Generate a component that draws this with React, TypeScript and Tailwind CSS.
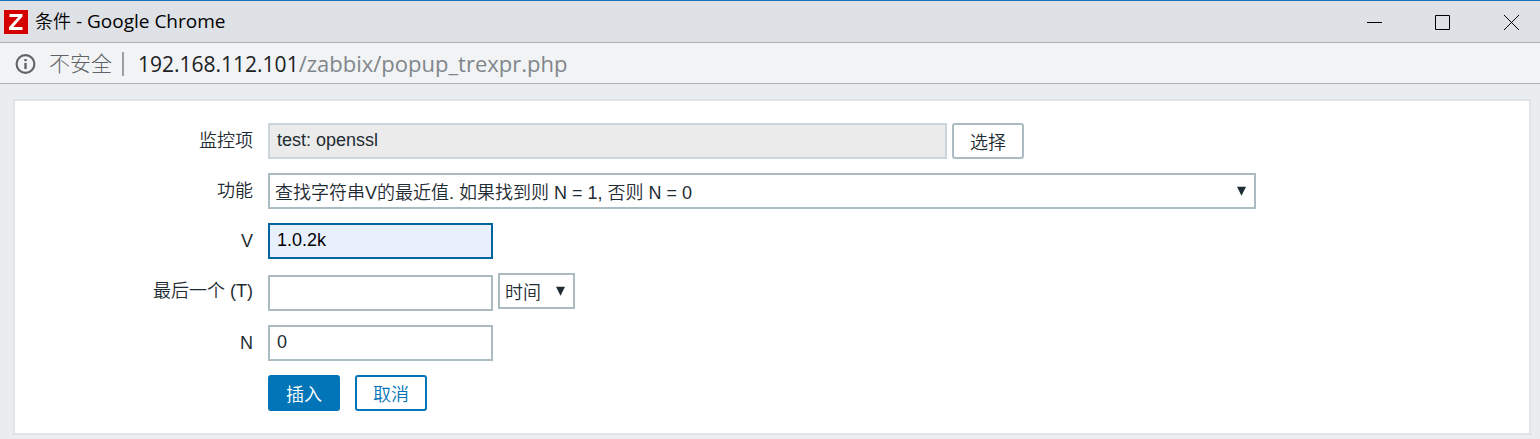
import type { ReactNode } from 'react';

function InfoIcon() {
  return (
    <svg width="21" height="20" viewBox="0 0 21 20" fill="none" aria-hidden="true">
      <circle cx="10.5" cy="10" r="8.9" stroke="#5f6368" strokeWidth="2.1" />
      <path d="M10.5 9v6M10.5 5v2.2" stroke="#5f6368" strokeWidth="2.4" />
    </svg>
  );
}

function Arrow() {
  return (
    <svg
      className="pointer-events-none absolute top-[13px] right-[9px]"
      width="10"
      height="10"
      viewBox="0 0 10 10"
      aria-hidden="true"
    >
      <path d="M0 0.8h9L4.5 9.8z" fill="#1f2c33" />
    </svg>
  );
}

function WindowButton({ label, children }: { label: string; children: ReactNode }) {
  return (
    <button type="button" aria-label={label} className="flex h-full w-[57px] items-center justify-center">
      <svg width="17" height="17" viewBox="0 0 17 17" fill="none" stroke="#000" aria-hidden="true">
        {children}
      </svg>
    </button>
  );
}

function Row({ label, htmlFor, children }: { label: string; htmlFor: string; children: ReactNode }) {
  return (
    <div className="flex items-start gap-[15px]">
      <label htmlFor={htmlFor} className="w-[238px] shrink-0 text-right leading-9">
        {label}
      </label>
      <div className="flex min-w-0 flex-1 items-start gap-[5px]">{children}</div>
    </div>
  );
}

const field = 'h-9 max-w-full border-2 px-[7px] pb-px outline-none';
const select = 'h-9 w-full appearance-none border-2 border-[#acbbc2] bg-white pl-[5px] pr-6 pt-1 outline-none';
const button = 'h-9 w-[72px] shrink-0 rounded-[3px] border-2 pt-1 leading-none';

export default function App() {
  return (
    <div className="min-h-screen bg-[#e9edf0] font-['Liberation_Sans','Noto_Sans_CJK_SC',sans-serif] text-[18px] font-[350] text-[#1f2c33]">
      <header className="flex h-[43px] items-center border-t border-b border-t-[#1a6fb5] border-b-[#adaeb1] bg-[#dee1e6] pl-1 font-['Open_Sans','Noto_Sans_CJK_SC',sans-serif] text-black">
        <svg width="24" height="24" viewBox="0 0 24 24" aria-hidden="true">
          <path fill="#d40000" d="M0 0h24v24H0z" />
          <path fill="#fff" d="M5.5 4h13v2.6L9.3 17h9.2v3H5v-2.7L14.2 7H5.5z" />
        </svg>
        <h1 className="ml-[7px] flex-1">
          条件<span className="text-[19px] font-normal"> - Google Chrome</span>
        </h1>
        <div className="flex h-full gap-3">
          <WindowButton label="最小化">
            <path d="M2 9.5h15" />
          </WindowButton>
          <WindowButton label="最大化">
            <path d="M1.5 2.5h14v14h-14z" />
          </WindowButton>
          <WindowButton label="关闭">
            <path d="M1 2l15 15M16 2l-15 15" />
          </WindowButton>
        </div>
      </header>
      <div className="flex h-[41px] items-center border-b border-[#b0b1b4] bg-[#f1f3f4] pt-px pl-[15px] font-['Open_Sans','Noto_Sans_CJK_SC',sans-serif] text-[21px]">
        <InfoIcon />
        <span className="ml-[13px] font-light text-[#5f6368]">不安全</span>
        <span className="ml-[10px] h-6 w-[2px] bg-[#9a9da1]" />
        <span className="ml-[14px] font-normal text-[#202124]">
          192.168.112.101<span className="text-[22px] text-[#80868b]">/zabbix/popup_trexpr.php</span>
        </span>
      </div>
      <main className="pt-[15px] pr-[9px] pb-1 pl-[13px]">
        <form
          className="flex flex-col gap-[14px] border-2 border-[#dfe4e7] bg-white py-[22px]"
          onSubmit={(e) => e.preventDefault()}
        >
          <Row label="监控项" htmlFor="item">
            <input
              id="item"
              readOnly
              defaultValue="test: openssl"
              className={`${field} w-[679px] border-[#ccd5d9] bg-[#ebebeb]`}
            />
            <button type="button" className={`${button} border-[#acbbc2] bg-white`}>
              选择
            </button>
          </Row>
          <Row label="功能" htmlFor="func">
            <div className="relative w-[988px] max-w-full">
              <select id="func" className={select}>
                <option>查找字符串V的最近值. 如果找到则 N = 1, 否则 N = 0</option>
              </select>
              <Arrow />
            </div>
          </Row>
          <Row label="V" htmlFor="v">
            <input
              id="v"
              defaultValue="1.0.2k"
              className={`${field} w-[225px] border-[#00659c] bg-[#e8f0fe] text-black`}
            />
          </Row>
          <Row label="最后一个 (T)" htmlFor="last">
            <div className="pt-[2px]">
              <input id="last" className={`${field} w-[225px] border-[#acbbc2]`} />
            </div>
            <div className="relative w-[77px]">
              <select aria-label="单位" className={select}>
                <option>时间</option>
              </select>
              <Arrow />
            </div>
          </Row>
          <Row label="N" htmlFor="n">
            <input id="n" defaultValue="0" className={`${field} w-[225px] border-[#acbbc2]`} />
          </Row>
          <div className="flex gap-[15px] pl-[253px]">
            <button type="submit" className={`${button} border-[#0275b8] bg-[#0275b8] text-white`}>
              插入
            </button>
            <button type="button" className={`${button} border-[#0275b8] bg-white text-[#0275b8]`}>
              取消
            </button>
          </div>
        </form>
      </main>
    </div>
  );
}
